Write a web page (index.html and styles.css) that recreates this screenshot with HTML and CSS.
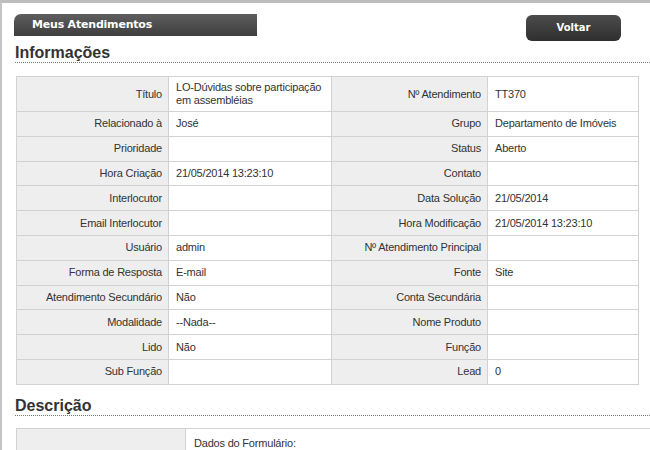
FILE: index.html
```html
<!DOCTYPE html>
<html lang="pt">
<head>
<meta charset="utf-8">
<title>Meus Atendimentos</title>
<link rel="stylesheet" href="styles.css">
</head>
<body>
<div class="page">
  <div class="header">
    <div class="tab">Meus Atendimentos</div>
    <a class="btn" href="#">Voltar</a>
  </div>
  <h2 class="section">Informações</h2>
  <table class="info">
    <colgroup>
      <col class="c1"><col class="c2"><col class="c3"><col class="c4">
    </colgroup>
    <tr class="tall">
      <th>Título</th><td>LO-Dúvidas sobre participação em assembléias</td>
      <th>Nº Atendimento</th><td>TT370</td>
    </tr>
    <tr><th>Relacionado à</th><td>José</td><th>Grupo</th><td>Departamento de Imóveis</td></tr>
    <tr><th>Prioridade</th><td></td><th>Status</th><td>Aberto</td></tr>
    <tr><th>Hora Criação</th><td>21/05/2014 13:23:10</td><th>Contato</th><td></td></tr>
    <tr><th>Interlocutor</th><td></td><th>Data Solução</th><td>21/05/2014</td></tr>
    <tr><th>Email Interlocutor</th><td></td><th>Hora Modificação</th><td>21/05/2014 13:23:10</td></tr>
    <tr><th>Usuário</th><td>admin</td><th>Nº Atendimento Principal</th><td></td></tr>
    <tr><th>Forma de Resposta</th><td>E-mail</td><th>Fonte</th><td>Site</td></tr>
    <tr><th>Atendimento Secundário</th><td>Não</td><th>Conta Secundária</th><td></td></tr>
    <tr><th>Modalidade</th><td>--Nada--</td><th>Nome Produto</th><td></td></tr>
    <tr><th>Lido</th><td>Não</td><th>Função</th><td></td></tr>
    <tr><th>Sub Função</th><td></td><th>Lead</th><td>0</td></tr>
  </table>
  <h2 class="section sec2">Descrição</h2>
  <table class="desc">
    <colgroup><col class="d1"><col class="d2"></colgroup>
    <tr><th></th><td>Dados do Formulário:</td></tr>
  </table>
</div>
</body>
</html>
```

FILE: styles.css
```css
html, body {
  margin: 0;
  padding: 0;
  background: #fff;
}
body {
  font-family: "Liberation Sans", Arial, sans-serif;
  font-size: 11px;
  color: #333;
}
.page {
  width: 650px;
  height: 450px;
  overflow: hidden;
  border-top: 3px solid #bdbdbd;
  border-left: 2px solid #c4c4c4;
  padding: 11px 0 0 12px;
  box-sizing: border-box;
}
.header {
  display: flex;
  align-items: flex-start;
  width: 607px;
  justify-content: space-between;
}
.tab {
  width: 225px;
  height: 22px;
  line-height: 22px;
  padding-left: 18px;
  background: linear-gradient(#5e5e5e, #3e3e3e);
  border-radius: 7px 0 0 0;
  color: #fff;
  font-family: "DejaVu Sans", Verdana, sans-serif;
  font-weight: bold;
  font-size: 11px;
  letter-spacing: -0.2px;
}
.btn {
  margin-top: 1px;
  width: 95px;
  height: 26px;
  line-height: 26px;
  text-align: center;
  background: linear-gradient(#4c4c4c, #2f2f2f);
  border-radius: 6px;
  color: #fff;
  text-decoration: none;
  font-family: "DejaVu Sans", Verdana, sans-serif;
  font-weight: bold;
  font-size: 10px;
}
.section {
  margin: 3px 0 0 1px;
  font-size: 16px;
  line-height: 18px;
  font-weight: bold;
  color: #333;
  border-bottom: 1px dotted #777;
}
.sec2 {
  margin-top: 12px;
}
table {
  border-collapse: collapse;
  table-layout: fixed;
  margin-left: 2px;
}
.info {
  margin-top: 13px;
  width: 622px;
}
.c1 { width: 152px; }
.c2 { width: 163px; }
.c3 { width: 156px; }
.c4 { width: 151px; }
th, td {
  border: 1px solid #d2d2d2;
  padding: 4px 6px 4px 7px;
  line-height: 13px;
  font-weight: normal;
  vertical-align: middle;
  letter-spacing: -0.2px;
}
th {
  background: #eeeeee;
  text-align: right;
}
td {
  text-align: left;
  background: #fff;
}
.info tr {
  height: 24.8px;
}
.info tr.tall {
  height: 35px;
}
.desc {
  margin-top: 12px;
  width: 634px;
}
.d1 { width: 169px; }
.desc td {
  padding-left: 8px;
  height: 22px;
  border-right: none;
}
```
